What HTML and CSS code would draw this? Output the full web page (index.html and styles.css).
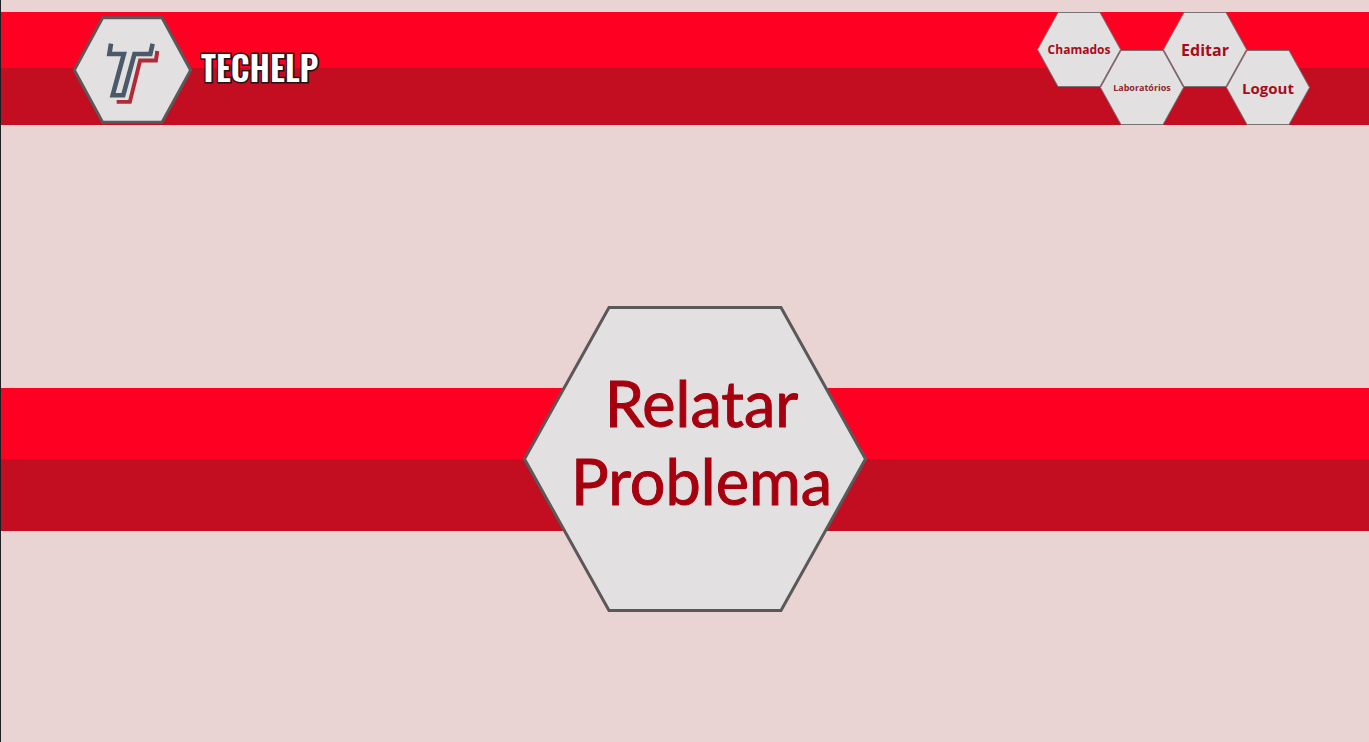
FILE: index.html
```html
<!DOCTYPE html>
<html lang="pt-BR">
<head>
  <meta charset="utf-8">
  <title>Techelp</title>
  <meta name="viewport" content="width=device-width, initial-scale=1">
  <link rel="stylesheet" href="styles.css">
</head>
<body>
  <header class="topbar">
    <a class="brand" href="#">
      <svg class="brand-logo" viewBox="39 46 360 327" aria-hidden="true">
        <path class="logo-hex" d="M43 210 129 51H308L395 210 308 368H129Z"/>
        <path class="logo-dark" d="M154 130 149 161H193L159 286H191L225 161H273L280 130"/>
        <path class="logo-red" d="M294 152 290 181H242L211 306H171"/>
      </svg>
      <span class="brand-name">TECHELP</span>
    </a>
    <nav class="menu">
      <a class="hex-link text-md" href="#">
        <svg class="hex-shape" viewBox="0 0 84 75" aria-hidden="true"><path d="M.5 37.500 21 .5H63L83.500 37.500 63 74.500H21Z"/></svg>
        <span class="hex-label">Chamados</span>
      </a>
      <a class="hex-link text-sm" href="#">
        <svg class="hex-shape" viewBox="0 0 84 75" aria-hidden="true"><path d="M.5 37.500 21 .5H63L83.500 37.500 63 74.500H21Z"/></svg>
        <span class="hex-label">Laboratórios</span>
      </a>
      <a class="hex-link text-xl" href="#">
        <svg class="hex-shape" viewBox="0 0 84 75" aria-hidden="true"><path d="M.5 37.500 21 .5H63L83.500 37.500 63 74.500H21Z"/></svg>
        <span class="hex-label">Editar</span>
      </a>
      <a class="hex-link text-lg" href="#">
        <svg class="hex-shape" viewBox="0 0 84 75" aria-hidden="true"><path d="M.5 37.500 21 .5H63L83.500 37.500 63 74.500H21Z"/></svg>
        <span class="hex-label">Logout</span>
      </a>
    </nav>
  </header>
  <main class="report">
    <button class="report-button" type="button">
      <svg class="report-hex" viewBox="0 0 344 306" aria-hidden="true"><path d="M1.500 153 86 1.500H258L342.500 153 258 304.500H86Z"/></svg>
      <span class="report-label">Relatar<br>Problema</span>
    </button>
  </main>
</body>
</html>
```
FILE: styles.css
```css
* {
  box-sizing: border-box;
}

body {
  margin: 0;
  min-height: 100vh;
  padding-top: 12px;
  border-left: 1px solid #1d1d22;
  background: #e9d3d3;
  font-family: "Open Sans", "Noto Sans", sans-serif;
}

.topbar {
  display: flex;
  justify-content: space-between;
  align-items: center;
  padding: 0 59px 0 72px;
  background: linear-gradient(#fe0022 50%, #c20e20 50%);
}

.brand {
  display: flex;
  align-items: center;
  gap: 9px;
  padding-top: 3px;
  color: #fff;
  text-decoration: none;
}

.brand-logo {
  width: 119px;
  height: 108px;
}

.logo-hex {
  fill: #e2e0e1;
  stroke: #5a5858;
  stroke-width: 9;
}

.logo-dark,
.logo-red {
  fill: none;
  stroke: #4b5a68;
  stroke-width: 14;
}

.logo-red {
  stroke: #b12a38;
  stroke-width: 12;
}

.brand-name {
  padding-bottom: 6px;
  font-family: Oswald, "Liberation Sans Narrow", "Liberation Sans", sans-serif;
  font-size: 34px;
  font-weight: 600;
  line-height: 40px;
  -webkit-text-stroke: 3px #2a1014;
  paint-order: stroke fill;
}

.menu {
  display: flex;
  height: 113px;
}

.hex-link {
  position: relative;
  display: flex;
  align-items: center;
  justify-content: center;
  width: 84px;
  height: 75px;
  color: #a80c1c;
  font-weight: 700;
  text-decoration: none;
}

.hex-link + .hex-link {
  margin-left: -21px;
}

.hex-link:nth-child(even) {
  align-self: flex-end;
}

.hex-shape {
  position: absolute;
  inset: 0;
  fill: #e2e0e1;
  stroke: #777375;
}

.hex-label {
  position: relative;
}

.text-sm {
  color: #8f2630;
  font-size: 9px;
}

.text-md {
  font-size: 12px;
}

.text-lg {
  font-size: 15px;
}

.text-xl {
  font-size: 16px;
}

.report {
  display: flex;
  justify-content: center;
  margin-top: 181px;
  padding-left: 19px;
  background: linear-gradient(transparent 82px, #fe0022 82px, #fe0022 50%, #c20e20 50%, #c20e20 225px, transparent 225px);
}

.report-button {
  position: relative;
  width: 344px;
  height: 306px;
  padding: 0 0 34px 14px;
  border: 0;
  background: none;
  color: #a6000f;
  font-family: "Trebuchet MS", Lato, sans-serif;
  font-size: 63px;
  line-height: 78px;
  -webkit-text-stroke: 1px #a6000f;
  cursor: pointer;
}

.report-hex {
  position: absolute;
  inset: 0;
  fill: #e2e0e1;
  stroke: #5a5858;
  stroke-width: 3;
}

.report-label {
  position: relative;
}
```
